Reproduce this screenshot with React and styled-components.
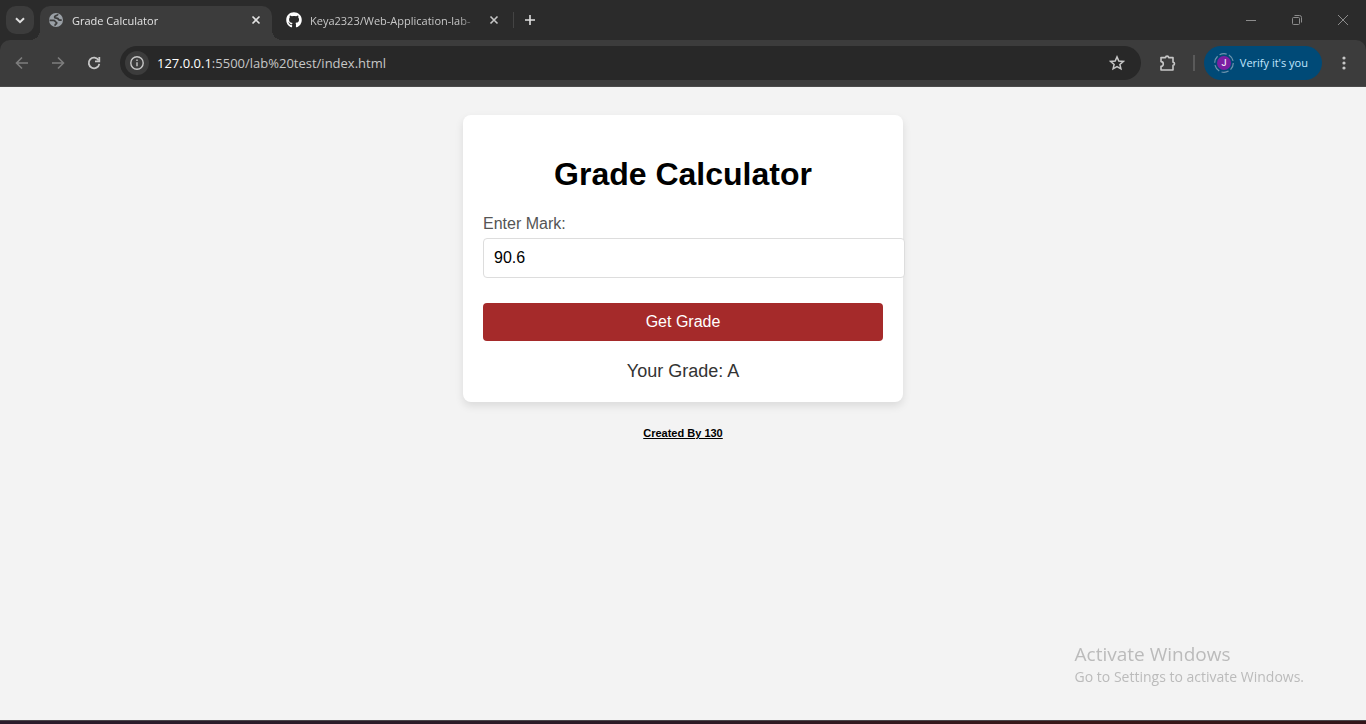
import React, { useState } from "react";
import styled, { createGlobalStyle } from "styled-components";
import { FaGithub } from "react-icons/fa";

const UI_FONT = '"Open Sans", "Noto Sans", sans-serif';
const PAGE_FONT = '"Liberation Sans", Arial, sans-serif';

const GlobalStyle = createGlobalStyle`
  *, *::before, *::after { box-sizing: border-box; }
  body { margin: 0; background: #f3f3f3; }
  button { border: 0; padding: 0; margin: 0; background: none; font: inherit; color: inherit; cursor: pointer; }
`;

const Screen = styled.div`
  display: flex;
  flex-direction: column;
  min-height: 100vh;
`;

const TabStrip = styled.header`
  display: flex;
  align-items: flex-end;
  height: 40px;
  padding-left: 6px;
  background: #2b2b2b;
  color: #dfdfdf;
  font: 11px/16px ${UI_FONT};
`;

const TabSearch = styled.button`
  display: grid;
  place-items: center;
  width: 28px;
  height: 28px;
  margin: 0 6px 6px 0;
  border-radius: 10px;
  background: #3c3c3c;
`;

const Tab = styled.div`
  position: relative;
  display: flex;
  align-items: center;
  gap: 8px;
  width: ${(p) => (p.$active ? 232 : 238)}px;
  height: 34px;
  padding: 0 8px 6px ${(p) => (p.$active ? 8 : 14)}px;
  border-radius: 10px 10px 0 0;
  background: ${(p) => (p.$active ? "#3c3c3c" : "transparent")};
  color: ${(p) => (p.$active ? "#e3e3e3" : "#c7c7c7")};

  &::before,
  &::after {
    content: ${(p) => (p.$active ? '""' : "none")};
    position: absolute;
    bottom: 0;
    width: 10px;
    height: 10px;
  }
  &::before {
    left: -10px;
    background: radial-gradient(circle at 0 0, transparent 10px, #3c3c3c 10px);
  }
  &::after {
    right: -10px;
    background: radial-gradient(circle at 100% 0, transparent 10px, #3c3c3c 10px);
  }
`;

const TabTitle = styled.span`
  flex: 1;
  overflow: hidden;
  white-space: nowrap;
  line-height: 18px;
  padding-top: 2px;
  mask-image: linear-gradient(to right, #000 calc(100% - 20px), transparent);
`;

const SmallButton = styled.button`
  display: grid;
  place-items: center;
  width: 16px;
  height: 16px;
`;

const Divider = styled.span`
  width: ${(p) => p.$width}px;
  height: 16px;
  background: ${(p) => p.$color};
`;

const StripEnd = styled.div`
  display: flex;
  align-items: center;
  gap: 8px;
  height: 34px;
  padding: 0 0 6px 3px;
`;

const WindowControls = styled.div`
  display: flex;
  margin-left: auto;
  align-self: stretch;
  color: #8c8c8c;
`;

const WindowButton = styled.button`
  display: grid;
  place-items: center;
  width: 46px;
  height: 40px;
`;

const ToolbarBack = styled.div`
  background: #2b2b2b;
`;

const Toolbar = styled.nav`
  display: flex;
  align-items: center;
  height: 47px;
  padding: 0 4px;
  border-bottom: 1px solid #4a4a4a;
  border-radius: 10px 10px 0 0;
  background: #3c3c3c;
  color: #c7c7c7;
`;

const ToolButton = styled.button`
  display: grid;
  place-items: center;
  width: 36px;
  height: 34px;
  color: ${(p) => (p.$dim ? "#7d7d7d" : "#c7c7c7")};
`;

const AddressBar = styled.div`
  display: flex;
  flex: 1;
  align-items: center;
  height: 34px;
  margin: 0 9px 0 8px;
  padding: 0 6px 0 5px;
  border-radius: 17px;
  background: #282828;
`;

const InfoButton = styled.button`
  display: grid;
  place-items: center;
  width: 24px;
  height: 24px;
  margin-right: 8px;
  border-radius: 12px;
  background: #3c3c3c;
`;

const Url = styled.span`
  flex: 1;
  color: #c7c7c7;
  font: 13px/20px ${UI_FONT};
`;

const Host = styled.span`
  color: #ffffff;
`;

const ProfileGroup = styled.div`
  display: flex;
  align-items: center;
  gap: 9px;
  margin: 0 4px 0 7px;
`;

const ProfileChip = styled.button`
  display: flex;
  align-items: center;
  gap: 6px;
  height: 34px;
  padding: 0 14px 0 10px;
  border-radius: 17px;
  background: #004a77;
  color: #c2e7ff;
  font: 500 11px/16px ${UI_FONT};
`;

const Main = styled.main`
  display: flex;
  flex: 1;
  flex-direction: column;
  align-items: center;
  padding: 28px 20px;
  background: #f3f3f3;
  font-family: ${PAGE_FONT};
`;

const Card = styled.form`
  display: flex;
  flex-direction: column;
  width: 100%;
  max-width: 440px;
  padding: 40px 20px 20px;
  border-radius: 8px;
  background: #ffffff;
  box-shadow: 0 4px 8px rgba(0, 0, 0, 0.1);
`;

const Heading = styled.h1`
  margin: 0 0 22px;
  color: #000000;
  font-size: 32px;
  line-height: 38px;
  text-align: center;
`;

const Label = styled.label`
  margin-bottom: 5px;
  color: #555555;
  font-size: 16px;
  line-height: 18px;
`;

const MarkInput = styled.input`
  box-sizing: content-box;
  width: 100%;
  height: 18px;
  margin-bottom: 25px;
  padding: 10px;
  border: 1px solid #dddddd;
  border-radius: 4px;
  outline: 0;
  background: #ffffff;
  color: #000000;
  font: 16px/18px ${PAGE_FONT};
`;

const SubmitButton = styled.button`
  height: 38px;
  margin-bottom: 20px;
  border-radius: 4px;
  background: #a52a2a;
  color: #ffffff;
  font: 16px/18px ${PAGE_FONT};
`;

const Result = styled.output`
  color: #333333;
  font-size: 18px;
  line-height: 21px;
  text-align: center;
`;

const Credit = styled.h6`
  margin: 25px 0 0;
  color: #000000;
  font-size: 11px;
  line-height: 12px;
  text-decoration: underline;
`;

const Watermark = styled.aside`
  position: fixed;
  right: 62px;
  bottom: 37px;
  color: #bbbbbb;
  font: 14px/20px ${UI_FONT};
  pointer-events: none;
`;

const WatermarkTitle = styled.div`
  font-size: 19px;
  line-height: 25px;
`;

const DesktopEdge = styled.footer`
  height: 4px;
  border-top: 1px solid #4b474b;
  background: linear-gradient(to right, #2a1c2b, #2c1a25 50%, #3a1717 80%, #321519);
`;

function Icon({ size = 16, weight = 1.6, children }) {
  return (
    <svg
      width={size}
      height={size}
      viewBox={`0 0 ${size} ${size}`}
      fill="none"
      stroke="currentColor"
      strokeWidth={weight}
      aria-hidden="true"
    >
      {children}
    </svg>
  );
}

const CloseIcon = () => (
  <Icon><path d="M4.5 4.5l7 7M11.5 4.5l-7 7" /></Icon>
);

const GlobeIcon = () => (
  <Icon>
    <circle cx="8" cy="8" r="7" fill="#9aa0a6" stroke="none" />
    <path
      d="M10 2.2c-.6 1.7-3.4 1.2-3.4 2.8 0 1.500 1.800.9 3 1.400 1 .5.7 1.800 2.100 1.800h2M1.500 8.300h4c1.800 0 1.500 1.600 2.700 2 .9.400.4 1.500-.5 1.800-.5.200-.6.7-.6 1.600"
      stroke="#3c3c3c"
      strokeWidth="1.8"
    />
  </Icon>
);

function judge(mark) {
  const value = Number(mark);
  if (value >= 80) return "A";
  if (value >= 70) return "B";
  if (value >= 60) return "C";
  if (value >= 50) return "D";
  return "F";
}

function BrowserTabs() {
  return (
    <TabStrip>
      <TabSearch aria-label="Search tabs">
        <Icon weight={2}><path d="M4 6.2l4 4 4-4" /></Icon>
      </TabSearch>
      <Tab $active>
        <GlobeIcon />
        <TabTitle>Grade Calculator</TabTitle>
        <SmallButton aria-label="Close Grade Calculator"><CloseIcon /></SmallButton>
      </Tab>
      <Tab>
        <FaGithub size={16} color="#ffffff" />
        <TabTitle>Keya2323/Web-Application-lab-</TabTitle>
        <SmallButton aria-label="Close Keya2323"><CloseIcon /></SmallButton>
      </Tab>
      <StripEnd>
        <Divider $width={1} $color="#444444" />
        <SmallButton aria-label="New tab">
          <Icon><path d="M8 3v10M3 8h10" /></Icon>
        </SmallButton>
      </StripEnd>
      <WindowControls>
        <WindowButton aria-label="Minimize">
          <Icon weight={1}><path d="M3 8.5h10" /></Icon>
        </WindowButton>
        <WindowButton aria-label="Restore">
          <Icon weight={1}>
            <rect x="3.5" y="5.5" width="7" height="7" rx="1" />
            <path d="M5.5 3.5h5a2 2 0 0 1 2 2v5" />
          </Icon>
        </WindowButton>
        <WindowButton aria-label="Close">
          <Icon weight={1}><path d="M3 3l10 10M13 3L3 13" /></Icon>
        </WindowButton>
      </WindowControls>
    </TabStrip>
  );
}

function BrowserToolbar() {
  return (
    <ToolbarBack>
      <Toolbar aria-label="Browser">
        <ToolButton $dim aria-label="Back">
          <Icon><path d="M14 8H3M8 2.5L2.5 8 8 13.5" /></Icon>
        </ToolButton>
        <ToolButton $dim aria-label="Forward">
          <Icon><path d="M2 8h11M8 2.5L13.5 8 8 13.5" /></Icon>
        </ToolButton>
        <ToolButton aria-label="Reload">
          <Icon weight={1.8}>
            <path d="M12.6 5.2A5.3 5.3 0 1 0 13.3 8.8" />
            <path d="M13.3 2v4.3H9" />
          </Icon>
        </ToolButton>
        <AddressBar>
          <InfoButton aria-label="Site information">
            <Icon weight={1.4}>
              <circle cx="8" cy="8" r="6.2" />
              <path d="M8 7.2v4M8 4.6v1.5" />
            </Icon>
          </InfoButton>
          <Url><Host>127.0.0.1</Host>:5500/lab%20test/index.html</Url>
          <ToolButton aria-label="Bookmark">
            <Icon weight={1.5}>
              <path d="M8 1.9l1.8 4.1 4.5.4-3.4 3 1 4.4L8 11.5l-3.9 2.3 1-4.4-3.4-3 4.5-.4z" />
            </Icon>
          </ToolButton>
        </AddressBar>
        <ToolButton aria-label="Extensions">
          <Icon size={18}>
            <path d="M2 3.6h4.6a1.5 1.5 0 0 1 3 0H14v4.6a1.5 1.5 0 0 1 0 3V16H2v-3.8a2.3 2.3 0 0 0 0-4.6z" strokeLinejoin="round" />
          </Icon>
        </ToolButton>
        <ProfileGroup>
          <Divider $width={2} $color="#5a5a5a" />
          <ProfileChip>
            <svg width="20" height="20" viewBox="0 0 20 20" aria-hidden="true">
              <circle cx="10" cy="10" r="9.3" fill="none" stroke="#6d94ae" strokeWidth="1.2" strokeDasharray="7.3 2.44" />
              <circle cx="10" cy="10" r="7" fill="#7b1fa2" />
              <text x="10" y="13" fill="#f0e4f5" fontFamily="Roboto, sans-serif" fontSize="9" textAnchor="middle">J</text>
            </svg>
            Verify it's you
          </ProfileChip>
        </ProfileGroup>
        <ToolButton aria-label="Menu">
          <Icon>
            <g fill="currentColor" stroke="none">
              <circle cx="8" cy="3" r="1.6" />
              <circle cx="8" cy="8" r="1.6" />
              <circle cx="8" cy="13" r="1.6" />
            </g>
          </Icon>
        </ToolButton>
      </Toolbar>
    </ToolbarBack>
  );
}

function GradeForm() {
  const [mark, setMark] = useState("90.6");
  const [grade, setGrade] = useState("A");
  const submit = (event) => {
    event.preventDefault();
    setGrade(judge(mark));
  };
  return (
    <Card onSubmit={submit}>
      <Heading>Grade Calculator</Heading>
      <Label htmlFor="mark">Enter Mark:</Label>
      <MarkInput id="mark" type="text" inputMode="decimal" value={mark} onChange={(e) => setMark(e.target.value)} />
      <SubmitButton type="submit">Get Grade</SubmitButton>
      <Result htmlFor="mark">Your Grade: {grade}</Result>
    </Card>
  );
}

export default function App() {
  return (
    <Screen>
      <GlobalStyle />
      <BrowserTabs />
      <BrowserToolbar />
      <Main>
        <GradeForm />
        <Credit>Created By 130</Credit>
      </Main>
      <DesktopEdge />
      <Watermark>
        <WatermarkTitle>Activate Windows</WatermarkTitle>
        Go to Settings to activate Windows.
      </Watermark>
    </Screen>
  );
}
